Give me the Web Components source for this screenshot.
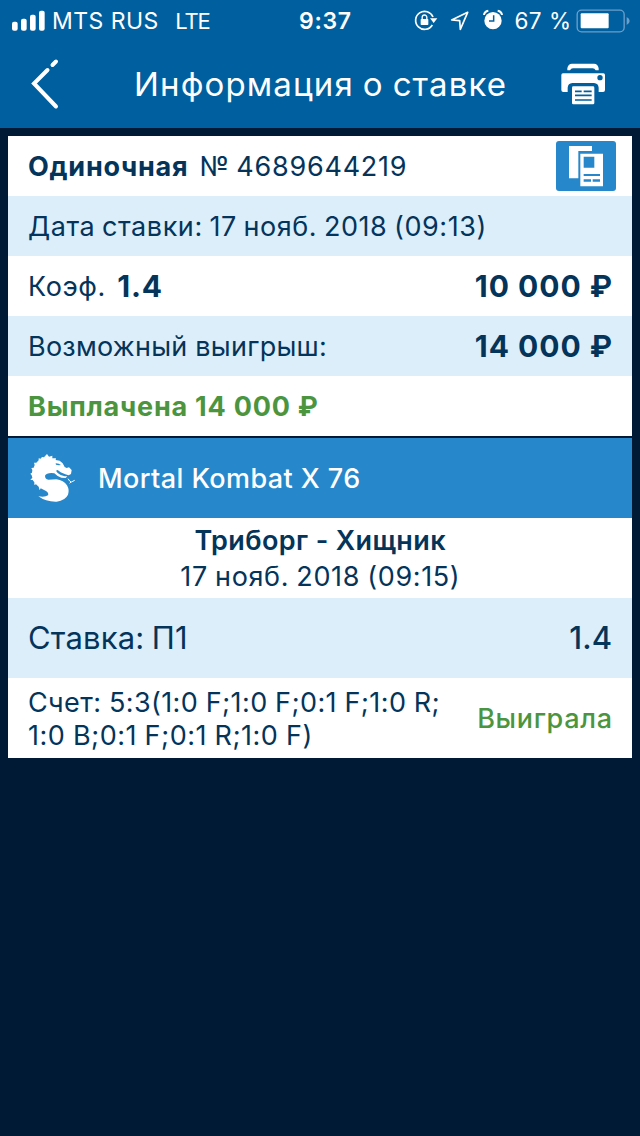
<!DOCTYPE html>
<html lang="ru">
<head>
<meta charset="utf-8">
<title>Информация о ставке</title>
<style>
html { background: #001a36; }
body { margin: 0; font-family: Inter, "Noto Sans", sans-serif; color: #04345a; font-size: 27px; font-kerning: normal; }
</style>
</head>
<body>
<bet-screen></bet-screen>

<script>
const define = (name, css, html) => customElements.define(name, class extends HTMLElement {
  constructor() {
    super();
    this.attachShadow({ mode: 'open' }).innerHTML = `<style>${css}</style>${html}`;
  }
});

/* name: [width, height, markup] */
const icons = {
  signal: [34, 22, `<svg viewBox="36 28 102 66"><g fill="#fff"><rect x="36" y="63" width="17" height="27" rx="6"/><rect x="63" y="54" width="17" height="36" rx="6"/><rect x="90" y="42" width="17" height="48" rx="6"/><rect x="117" y="30" width="17" height="60" rx="6"/></g></svg>`],
  lock: [27, 32, `<svg viewBox="10 0 81 96"><path d="M68 60A27 27 0 1 1 70 36" fill="none" stroke="#fff" stroke-width="5"/><path d="M61 40h22L72 54z" fill="#fff"/><rect x="33" y="42" width="23" height="18" rx="2" fill="#fff"/><path d="M37.500 43v-6a7 7 0 0 1 14 0v6" fill="none" stroke="#fff" stroke-width="4"/></svg>`],
  arrow: [22, 32, `<svg viewBox="118 0 66 96"><path d="M174 22L126 45l24 2 2 26z" fill="none" stroke="#fff" stroke-width="5" stroke-linejoin="round"/></svg>`],
  alarm: [24, 32, `<svg viewBox="212 0 72 96"><circle cx="248" cy="47" r="26" fill="#fff"/><path d="M221 30q1-11 13-13M275 30q-1-11-13-13" fill="none" stroke="#fff" stroke-width="6"/><path d="M250 31v17h-14" fill="none" stroke="#005f9e" stroke-width="4.500"/></svg>`],
  battery: [54, 24, `<svg viewBox="526 26 162 72"><rect x="529.500" y="29.500" width="141" height="65" rx="13" fill="none" stroke="#6b9fcb" stroke-width="4"/><rect x="540" y="39" width="84" height="45" rx="3" fill="#fff"/><path d="M678 50q9 4 9 12t-9 12z" fill="#6b9fcb"/></svg>`],
  back: [34, 56, `<svg viewBox="0 0 34 56"><path d="M29 5.500L25.500 9M20.500 14L7 27.500 29 50.500" fill="none" stroke="#fff" stroke-width="4" stroke-linecap="round" stroke-linejoin="miter"/></svg>`],
  printer: [66, 64, `<svg viewBox="0 0 198 192"><path d="M52 58V52Q54 38 66 38h66q12 0 14 14v6h-9q-3-6-9-6H69q-6 0-9 6z" fill="#fff"/><path d="M39 67h121q5 0 5 5v45q0 6-6 6h-13v-13q-1-13-14-14H67q-13 1-14 14v13H40q-6 0-6-6V72q0-5 5-5z" fill="#fff"/><circle cx="150" cy="80" r="8" fill="#005f9e"/><rect x="66" y="106" width="67" height="54" rx="4" fill="#fff"/><path d="M75 121h20M101 121h24M75 133h50M75 147h50" stroke="#005f9e" stroke-width="5"/></svg>`],
  copy: [60, 50, `<svg viewBox="48 48 180 150"><rect x="48" y="48" width="180" height="150" rx="9" fill="#2688ca"/><path d="M87 63h69v15h-41v82H87z" fill="#fff"/><path fill-rule="evenodd" d="M121 86h68v98h-68zM131 95v33h32V95zM131 147v6h49v-6zM131 163v7h22v-7zM158 163v7h22v-7z" fill="#fff"/></svg>`],
  dragon: [66, 66, `<svg viewBox="-24 -15 198 198"><path fill="#fff" d="M57 12L63 20 73 17 73 25 84 25 83 30 95 32 104 40 110 51 116 54 123 52 131 60 129 72 122 76 112 73 98 67 89 60 84 62 89 69 98 75 110 79 118 79 113 84 100 83 89 78 79 70 70 69Q55 70 51 77 51 87 61 89L85 88Q107 91 117 106 125 120 120 134 112 151 86 155 54 156 31 139 52 142 60 136 63 129 54 123L38 115 35 121 32 110 24 103 19 105 19 97 14 90 7 90 13 83 11 76 7 71 12 68 13 60 10 54 17 53 20 45 18 38 25 38 32 31 32 25 38 26 42 21 48 22 52 17Z"/><path d="M83 40l9 1 7 4-6 1-9-2z" fill="#2688ca"/><path d="M120 86l5 7 5 3 10-5M129 96l-4 4" fill="none" stroke="#fff" stroke-width="3"/></svg>`]
};

customElements.define('ui-icon', class extends HTMLElement {
  connectedCallback() {
    const [w, h, svg] = icons[this.getAttribute('name')];
    this.attachShadow({ mode: 'open' }).innerHTML =
      `<style>:host{display:block;flex:none;width:${w}px;height:${h}px}svg{display:block;width:100%;height:100%}</style>${svg}`;
  }
});

/* One line of text; size, weight, tracking and word gap come from attributes. */
customElements.define('ui-text', class extends HTMLElement {
  connectedCallback() {
    const a = (n, d) => this.getAttribute(n) || d;
    this.attachShadow({ mode: 'open' }).innerHTML =
      `<style>:host{display:block;flex:none;white-space:pre;font-size:${a('size', 27)}px;font-weight:${a('weight', 400)};letter-spacing:${a('track', 0)}px;word-spacing:${a('gap', 0)}px}span{display:block;margin-right:${-a('track', 0)}px}</style><span><slot></slot></span>`;
  }
});

define('status-bar', `
  :host{display:flex;align-items:center;height:41px;color:#fff;background:#005f9e}
  .l,.r{flex:1 1 0;min-width:0;display:flex;align-items:center}
  .l{padding-left:12px}.l ui-text{margin-left:6px}.l ui-text+ui-text{margin-left:17px}
  .time{margin-left:8px}
  .r{justify-content:flex-end;padding-right:10px}
  .r [name=arrow]{margin-left:9px}.r [name=alarm]{margin-left:10px}.r ui-text{margin:0 5px 0 9px}`,
  `<div class="l"><ui-icon name="signal"></ui-icon><ui-text size="23" track=".45">MTS RUS</ui-text><ui-text size="22" track="-1.1">LTE</ui-text></div>
   <ui-text class="time" size="23" weight="600" track=".7">9:37</ui-text>
   <div class="r"><ui-icon name="lock"></ui-icon><ui-icon name="arrow"></ui-icon><ui-icon name="alarm"></ui-icon><ui-text size="22.5" track=".5">67 %</ui-text><ui-icon name="battery"></ui-icon></div>`);

define('nav-bar', `
  :host{display:flex;align-items:center;height:87px;box-sizing:border-box;padding:0 24px 0 27px;color:#fff;background:#005f9e}
  ui-text{margin:0 auto 2px 73px}ui-icon[name=back]{margin-bottom:2px}ui-icon[name=printer]{margin-bottom:4px}`,
  `<ui-icon name="back"></ui-icon><ui-text size="33" track="1.13" gap="-1.500"><slot></slot></ui-text><ui-icon name="printer"></ui-icon>`);

define('info-row', `
  :host{display:flex;align-items:center;height:60px;box-sizing:border-box;padding:0 20px;background:#fff}
  :host([tint]){background:#dceefa}
  :host([tall]){height:80px}
  :host([tall][tint]){padding-bottom:1px}
  :host([paid]){color:#4c9540}
  .end{margin-left:auto;display:flex}`,
  `<slot></slot><div class="end"><slot name="end"></slot></div>`);

define('game-bar', `
  :host{display:flex;align-items:center;gap:12px;height:80px;margin-top:2px;padding-left:12px;background:#2688ca;color:#fff}`,
  `<ui-icon name="dragon"></ui-icon><slot></slot>`);

define('match-title', `
  :host{display:flex;flex-direction:column;align-items:center;justify-content:center;height:80px;box-sizing:border-box;padding-top:2px;background:#fff;line-height:36px}`,
  `<slot></slot>`);

define('bet-screen', `
  :host{display:block;min-height:1136px;background:#001a36}
  main{padding:8px}
  .gap{margin-left:12px}
  .score{line-height:33px;padding-top:2px}
  .copy{margin-right:-4px}
  .won{color:#4c9540}`,
  `<status-bar></status-bar>
  <nav-bar>Информация о ставке</nav-bar>
  <main>
    <info-row><ui-text weight="700" track=".75">Одиночная</ui-text><ui-text class="gap" track=".77" gap="-2">№ 4689644219</ui-text><ui-icon class="copy" slot="end" name="copy"></ui-icon></info-row>
    <info-row tint><ui-text track=".57" gap="-1.500">Дата ставки: 17 нояб. 2018 (09:13)</ui-text></info-row>
    <info-row><ui-text track=".58">Коэф.</ui-text><ui-text class="gap" size="30" weight="700" track=".8">1.4</ui-text><ui-text slot="end" size="30" weight="700" track=".98">10 000 ₽</ui-text></info-row>
    <info-row tint><ui-text track=".25">Возможный выигрыш:</ui-text><ui-text slot="end" size="30" weight="700" track=".98">14 000 ₽</ui-text></info-row>
    <info-row paid><ui-text weight="700" track=".77">Выплачена 14 000 ₽</ui-text></info-row>
    <game-bar><ui-text weight="500" track=".42">Mortal Kombat X 76</ui-text></game-bar>
    <match-title><ui-text weight="600" track=".38">Триборг - Хищник</ui-text><ui-text track=".63" gap="-1">17 нояб. 2018 (09:15)</ui-text></match-title>
    <info-row tint tall><ui-text size="31" track=".18" gap="-1.500">Ставка: П1</ui-text><ui-text slot="end" size="31" weight="500" track=".1">1.4</ui-text></info-row>
    <info-row tall><div class="score"><ui-text track=".4" gap="-.5">Счет: 5:3(1:0 F;1:0 F;0:1 F;1:0 R;</ui-text><ui-text track=".5" gap="-.5">1:0 B;0:1 F;0:1 R;1:0 F)</ui-text></div><ui-text class="won" slot="end" weight="500" track=".66">Выиграла</ui-text></info-row>
  </main>`);
</script>
</body>
</html>
